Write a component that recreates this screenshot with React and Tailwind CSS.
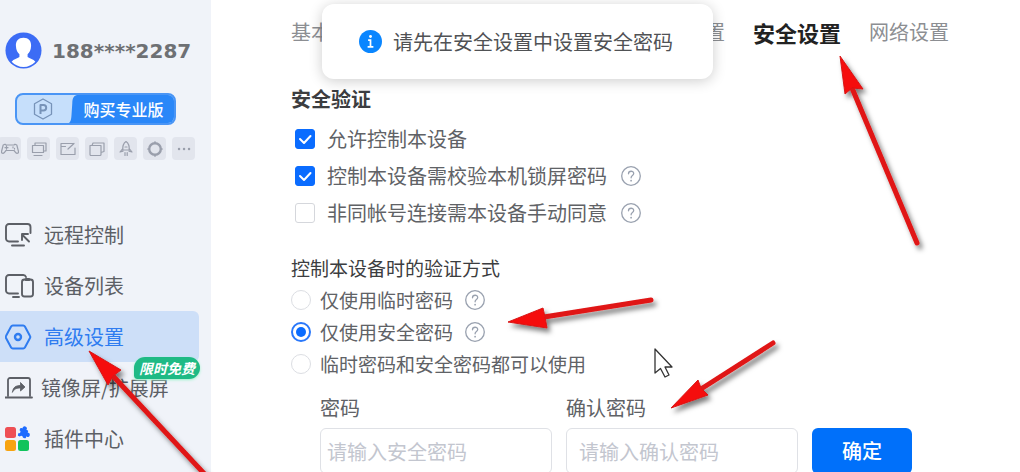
import { useState } from 'react'

const navItems = [
  { id: 'remote', label: '远程控制', icon: RemoteIcon },
  { id: 'devices', label: '设备列表', icon: DevicesIcon },
  { id: 'advanced', label: '高级设置', icon: AdvancedIcon },
  { id: 'mirror', label: '镜像屏/扩展屏', icon: MirrorIcon, badge: '限时免费' },
  { id: 'plugins', label: '插件中心', icon: PluginsIcon },
]

const checks = [
  { id: 'allow', label: '允许控制本设备' },
  { id: 'lock', label: '控制本设备需校验本机锁屏密码', help: true },
  { id: 'manual', label: '非同帐号连接需本设备手动同意', help: true },
]

const modes = [
  { id: 'temp', label: '仅使用临时密码', help: true },
  { id: 'safe', label: '仅使用安全密码', help: true },
  { id: 'both', label: '临时密码和安全密码都可以使用' },
]

function RemoteIcon() {
  return (
    <svg viewBox="0 0 30 26" className="w-[30px] h-[26px]" fill="none" stroke="currentColor" strokeWidth="1.9" strokeLinecap="round" strokeLinejoin="round">
      <path d="M13 19.500H4a3 3 0 0 1-3-3V5a3 3 0 0 1 3-3h18.500a3 3 0 0 1 3 3v6" />
      <path d="M7 23.500h12" />
      <path d="M24 19.500 17.500 13M17 18v-6h6" />
    </svg>
  )
}

function DevicesIcon() {
  return (
    <svg viewBox="0 0 30 26" className="w-[30px] h-[26px]" fill="none" stroke="currentColor" strokeWidth="1.9" strokeLinecap="round" strokeLinejoin="round">
      <path d="M13 20.500H4a3 3 0 0 1-3-3V5a3 3 0 0 1 3-3h14a3 3 0 0 1 3 2" />
      <path d="M8 24h6" />
      <rect x="17" y="6.500" width="11" height="17" rx="2.500" />
      <path d="M21 6.500h3" strokeWidth="3" />
    </svg>
  )
}

function AdvancedIcon() {
  return (
    <svg viewBox="0 0 30 26" className="w-[30px] h-[26px]" fill="none" stroke="currentColor" strokeWidth="2" strokeLinejoin="round">
      <path d="M7.800 1.500h10.400a2 2 0 0 1 1.700 1L25 12a2 2 0 0 1 0 2l-5.100 9.500a2 2 0 0 1-1.700 1H7.800a2 2 0 0 1-1.700-1L1 14a2 2 0 0 1 0-2l5.100-9.500a2 2 0 0 1 1.700-1Z" />
      <circle cx="13" cy="13" r="3" strokeWidth="2.400" />
    </svg>
  )
}

function MirrorIcon() {
  return (
    <svg viewBox="0 0 30 26" className="w-[30px] h-[26px]" fill="none" stroke="currentColor" strokeWidth="1.800" strokeLinecap="round" strokeLinejoin="round">
      <path d="M3 21V5a2 2 0 0 1 2-2h18a2 2 0 0 1 2 2v16" />
      <path d="M0 22.500h27" />
      <path d="M7.500 17c.5-4.500 3-6.500 8-6.500V7.500l4.500 4.500-4.500 4v-3c-4 0-6 .8-8 4Z" fill="currentColor" strokeWidth="0.800" />
    </svg>
  )
}

function PluginsIcon() {
  return (
    <svg viewBox="0 0 30 26" className="w-[30px] h-[26px]">
      <rect x="0" y="1" width="11" height="11" rx="2.500" fill="#ee4f54" />
      <rect x="0" y="14" width="11" height="11" rx="2.500" fill="#f7a310" />
      <rect x="13" y="14" width="11" height="11" rx="2.500" fill="#10c35c" />
      <g transform="rotate(20 18.500 6.500)" fill="#1e6bff">
        <rect x="14" y="3" width="8.500" height="8.500" rx="1" />
        <circle cx="18.200" cy="2.300" r="2.200" />
        <circle cx="23.200" cy="7.200" r="2.200" />
        <circle cx="14" cy="7.300" r="1.500" fill="#f0f3f9" />
        <circle cx="18.200" cy="11.800" r="1.500" fill="#f0f3f9" />
      </g>
    </svg>
  )
}

// small feature shortcuts under the upgrade button
const tools = [
  { name: 'game', art: <path d="M5 5h8l1-.8 1.800.8 1.700 6.500c.2 2-1.700 2.500-3 .8L13 10.500H5l-1.500 1.800C2.200 14 .3 13.500.5 11.500L2.200 5 4 4.200 5 5ZM4 7.700h3M5.500 6.200v3M12 6.800v1M13.500 8.300v.8" /> },
  { name: 'screens', art: <path d="M5 5V3h11v8h-2M2.500 5.500h11v7h-11ZM4 15.500h8" /> },
  { name: 'board', art: <path d="M16 8v6.500H2v-11h13M2.500 6.500h4M9 9l6-5.500" /> },
  { name: 'cube', art: <path d="M2 5.500h11v9a1 1 0 0 1-1 1H3a1 1 0 0 1-1-1ZM4 5.500 5 3h11v8.500l-3 1" /> },
  { name: 'rocket', art: <path d="M9 1.500c3 2 3.500 5 3.200 8.500H5.800C5.500 6.500 6 3.500 9 1.500ZM5.800 8.500 3 12l3-.8M12.200 8.500 15 12l-3-.8M8 12.500v3M10.200 12.500v3M8 7h2" /> },
  { name: 'ring', art: <><circle cx="9" cy="9" r="5.800" strokeWidth="2.400" /><path d="M9 1.500v1M9 15.500v1M1.500 9h1M15.500 9h1" /></> },
  { name: 'more', art: <path d="M4 9h.1M9 9h.1M14 9h.1" strokeWidth="2.400" /> },
]

function HelpIcon() {
  return (
    <svg viewBox="0 0 20 20" className="w-5 h-5 shrink-0 text-gray-400" fill="none" stroke="currentColor" strokeWidth="1.300" strokeLinecap="round">
      <circle cx="10" cy="10" r="9.300" />
      <path d="M7.500 7.800c0-3.400 5.200-3.300 5.200-.2 0 2-2.600 2-2.600 4.200" />
      <path d="M10.100 14.600v.1" strokeWidth="1.700" />
    </svg>
  )
}

function Sidebar() {
  return (
    <aside className="w-[211px] shrink-0 bg-[#f0f3f9] text-[#5c5f66]">
      <div className="flex items-center gap-2.5 pt-8 pl-[5px]">
        <svg viewBox="0 0 38 38" className="w-[37px] h-[37px]">
          <circle cx="19" cy="19" r="18.500" fill="#3c6cf5" />
          <path d="M19 6c5.200 0 8 3.300 7.800 8-.2 4.500-1.600 7-3.600 8.800v3c2.200 1.700 6 2 8 4.700A18 18 0 0 1 19 36 18 18 0 0 1 6.800 30.500c2-2.700 5.800-3 8-4.700v-3c-2-1.800-3.400-4.300-3.600-8.800C11 9.300 13.800 6 19 6Z" fill="#fff" />
        </svg>
        <span className="font-['DejaVu_Sans',sans-serif] text-xl leading-6 font-bold text-[#6e7074]">188****2287</span>
      </div>

      <button className="mt-6 ml-[15px] flex h-8 w-[161px] overflow-hidden rounded-lg border-2 border-[#4a95f5] bg-[#c6dffb]">
        <span className="flex h-full flex-1 items-center justify-center">
          <svg viewBox="0 0 20 22" className="w-5 h-[22px]" fill="none" stroke="#7793b8" strokeWidth="1.300" strokeLinejoin="round">
            <path d="m10 1 8.500 4.800v10.400L10 21l-8.500-4.800V5.800Z" />
            <path d="M7.500 16V7h3a2.700 2.700 0 0 1 0 5.400h-3" strokeWidth="2" />
          </svg>
        </span>
        <svg viewBox="0 0 8 28" className="h-full w-2" preserveAspectRatio="none">
          <path d="M8 0C4 1 3.500 4 3.300 8L2.500 20C2.200 25 1.500 27 0 28h8Z" fill="#2a87f8" />
        </svg>
        <span className="flex h-full w-[97px] items-center justify-center bg-[#2a87f8] pr-1 text-base leading-6 font-medium text-white">购买专业版</span>
      </button>

      <div className="mt-3 -ml-0.5 flex gap-1.5">
        {tools.map((tool) => (
          <button key={tool.name} aria-label={tool.name} className="flex h-[23px] w-[23px] items-center justify-center rounded bg-[#e2e5ed]">
            <svg viewBox="0 0 18 18" className="w-[18px] h-[18px]" fill="none" stroke="#9a9fac" strokeWidth="1.200" strokeLinecap="round" strokeLinejoin="round">
              {tool.art}
            </svg>
          </button>
        ))}
      </div>

      <nav className="mt-[49px] mr-3">
        {navItems.map(({ id, label, icon: Icon, badge }) => (
          <a
            key={id}
            href={`#${id}`}
            className={`relative flex h-[51px] items-center pl-[5px] text-xl leading-6 whitespace-nowrap ${
              id === 'advanced' ? 'rounded-r-md bg-[#cddff8] text-[#2f7cf0]' : ''
            } ${badge ? 'gap-1.5' : 'gap-[9px]'}`}
          >
            <Icon />
            {label}
            {badge && (
              <span className="absolute -top-[5px] -right-px flex h-[22px] items-center rounded-tl-xl rounded-r-xl rounded-bl-sm bg-[#1fba85] px-[5px] text-sm font-bold text-white italic shadow-sm shadow-emerald-200">
                {badge}
              </span>
            )}
          </a>
        ))}
      </nav>
    </aside>
  )
}

function Toast() {
  return (
    <div role="status" className="absolute top-1 left-[322px] flex h-[75px] items-center gap-[11px] rounded-xl bg-white pr-10 pl-[37px] text-xl leading-6 text-[#505255] shadow-[0_2px_14px_rgba(0,0,0,0.2)]">
      <svg viewBox="0 0 24 24" className="w-[23px] h-[23px]" fill="none" stroke="#fff" strokeWidth="2">
        <circle cx="12" cy="12" r="12" fill="#0a86ff" stroke="none" />
        <circle cx="12" cy="6.800" r="1.500" fill="#fff" stroke="none" />
        <path d="M9.500 10.500H12v7M9 17.500h6" strokeWidth="1.800" />
      </svg>
      请先在安全设置中设置安全密码
    </div>
  )
}

// head is the arrow tip with its two wings, x1/y1 to x2/y2 is the shaft
const arrows = [
  { id: 'tab', head: '840,56 863,89 852,88 845,94', x1: 852, y1: 88, x2: 917, y2: 243 },
  { id: 'radio', head: '508,322 543,308 545,317 547,328', x1: 544, y1: 317, x2: 651, y2: 300 },
  { id: 'confirm', head: '671,408 698,380 701,388 708,395', x1: 701, y1: 389, x2: 773, y2: 343 },
  { id: 'nav', head: '89,351 121,370 113,376 108,385', x1: 113, y1: 376, x2: 212, y2: 482 },
]

function Annotations() {
  return (
    <svg aria-hidden="true" viewBox="0 0 1020 472" className="pointer-events-none absolute top-0 left-0 h-[472px] w-[1020px]">
      <defs>
        <filter id="drop" x="-20%" y="-20%" width="140%" height="160%">
          <feDropShadow dx="3" dy="4" stdDeviation="2.500" floodColor="#000" floodOpacity="0.5" />
        </filter>
      </defs>
      {arrows.map((a) => (
        <g key={a.id} filter="url(#drop)">
          <line x1={a.x1} y1={a.y1} x2={a.x2} y2={a.y2} stroke="#e01414" strokeWidth="5" strokeLinecap="round" />
          <polygon points={a.head} fill="#f50a0a" stroke="#d81818" strokeWidth="1" />
        </g>
      ))}
      <path d="M655 349v24l5.500-4.500 4.500 8.500 4-2-4-8h7Z" fill="#fff" stroke="#333" strokeWidth="1.300" strokeLinejoin="round" />
    </svg>
  )
}

export default function App() {
  const [checked, setChecked] = useState({ allow: true, lock: true, manual: false })
  const [mode, setMode] = useState('safe')

  return (
    <div className="relative flex h-screen overflow-hidden bg-white font-['Noto_Sans_CJK_SC',sans-serif]">
      <Sidebar />

      <main className="min-w-0 flex-1 pl-20 text-xl leading-6 text-[#606266]">
        {/* Tabs */}
        <div className="flex h-16 items-center gap-7 whitespace-nowrap text-[#8c8e92]">
          <button className="w-[326px] text-left">基本设置</button>
          <button>显示设置</button>
          <button className="text-[22px] font-bold text-[#222]">安全设置</button>
          <button>网络设置</button>
        </div>

        {/* Device permissions */}
        <h2 className="mt-[23px] font-bold text-[#3c3d40]">安全验证</h2>
        <div className="mt-[9px]">
          {checks.map((item) => (
            <div key={item.id} className="flex h-[37px] items-center gap-3.5 pl-1">
              <label className="flex items-center gap-3">
                <span className="relative flex">
                  <input
                    type="checkbox"
                    checked={checked[item.id]}
                    onChange={() => setChecked({ ...checked, [item.id]: !checked[item.id] })}
                    className="h-5 w-5 appearance-none rounded-[3px] border border-[#d5d7dc] bg-white checked:border-[#0a6cff] checked:bg-[#0a6cff]"
                  />
                  {checked[item.id] && (
                    <svg viewBox="0 0 20 20" className="pointer-events-none absolute inset-0" fill="none" stroke="#fff" strokeWidth="2" strokeLinecap="round" strokeLinejoin="round">
                      <path d="m5 10 4 4 6.500-7" />
                    </svg>
                  )}
                </span>
                {item.label}
              </label>
              {item.help && <HelpIcon />}
            </div>
          ))}
        </div>

        {/* Verification mode */}
        <fieldset className="mt-[25px] text-[19px]">
          <legend className="text-[#3c3d40]">控制本设备时的验证方式</legend>
          <div className="pt-1">
            {modes.map((item) => (
              <div key={item.id} className="flex h-8 items-center gap-3">
                <label className="flex items-center gap-[9px]">
                  <span className="relative flex">
                    <input
                      type="radio"
                      name="mode"
                      checked={mode === item.id}
                      onChange={() => setMode(item.id)}
                      className="h-5 w-5 appearance-none rounded-full border border-[#dcdee3] bg-white checked:border-2 checked:border-[#2a78fa]"
                    />
                    {mode === item.id && <span className="pointer-events-none absolute inset-[5px] rounded-full bg-[#0a6cff]" />}
                  </span>
                  {item.label}
                </label>
                {item.help && <HelpIcon />}
              </div>
            ))}
          </div>
        </fieldset>

        {/* Password form */}
        <form className="mt-4 flex items-end gap-3.5 pl-[29px]" onSubmit={(e) => e.preventDefault()}>
          <label className="flex w-[232px] flex-col gap-2">
            密码
            <input type="password" placeholder="请输入安全密码" className="h-[46px] w-full rounded-md border border-[#dfe1e6] px-1.5 placeholder:text-[#c3c6cf]" />
          </label>
          <label className="flex w-[232px] flex-col gap-2">
            确认密码
            <input type="password" placeholder="请输入确认密码" className="h-[46px] w-full rounded-md border border-[#dfe1e6] px-3 placeholder:text-[#c3c6cf]" />
          </label>
          <button type="submit" className="h-[46px] w-[100px] rounded-md bg-[#0070fa] font-medium text-white">确定</button>
        </form>
      </main>

      <Toast />
      <Annotations />
    </div>
  )
}
